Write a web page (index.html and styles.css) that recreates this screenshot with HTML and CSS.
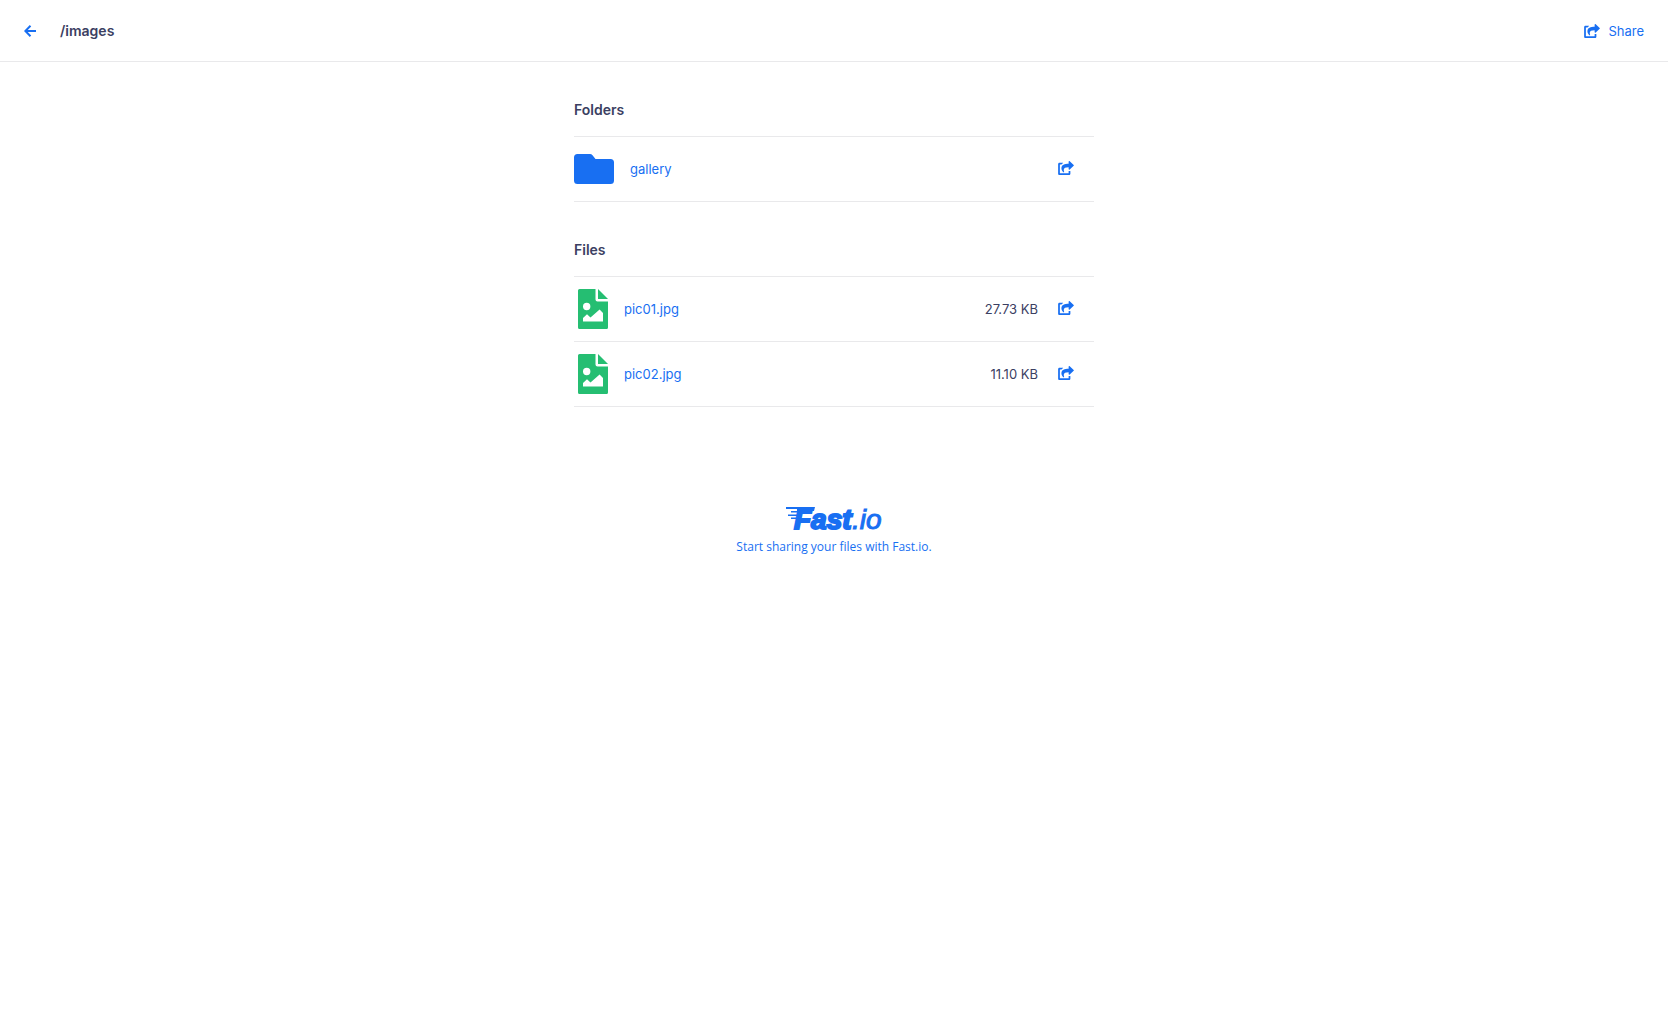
FILE: index.html
```html
<!DOCTYPE html>
<html lang="en">
<head>
    <meta charset="UTF-8">
    <meta name="viewport" content="width=device-width, initial-scale=1">
    <title>/images</title>
    <link rel="stylesheet" href="styles.css">
</head>
<body>
    <svg class="sprite" aria-hidden="true">
        <symbol id="icon-share" viewBox="0 0 576 512">
            <path d="M568.482 177.448L424.479 313.433C409.3 327.768 384 317.14 384 295.985v-71.963c-144.575.97-205.566 35.113-164.775 171.353 4.483 14.973-12.846 26.567-25.006 17.33C155.252 383.105 120 326.488 120 269.339c0-143.937 117.599-172.5 264-173.312V24.012c0-21.174 25.317-31.768 40.479-17.448l144.003 135.988c10.02 9.463 10.028 25.425 0 34.896zM384 379.128V448H64V128h50.916a11.99 11.99 0 0 0 8.648-3.693c14.953-15.568 32.237-27.89 51.014-37.676C185.708 80.83 181.584 64 169.033 64H48C21.49 64 0 85.49 0 112v352c0 26.51 21.49 48 48 48h352c26.51 0 48-21.49 48-48v-88.806c0-8.288-8.197-14.066-16.011-11.302a71.83 71.83 0 0 1-34.189 3.377c-7.27-1.046-13.8 4.514-13.8 11.859z"/>
        </symbol>
        <symbol id="icon-image" viewBox="0 0 30 40">
            <path fill-rule="evenodd" d="M1.5 0H17.500V10.500Q17.500 12.500 19.500 12.500H30V38.500Q30 40 28.500 40H1.500Q0 40 0 38.500V1.500Q0 0 1.500 0zM8.700 13.800a3.700 3.700 0 1 0 0 7.400a3.700 3.700 0 1 0 0-7.400zM5 32.500H25V24L21.600 20.400L12.500 28.500L9 25.200L5 29z"/>
            <path d="M20 0L30 10H20z"/>
        </symbol>
    </svg>

    <header class="topbar">
        <a class="back" href="#" aria-label="Back">
            <svg width="12" height="12" viewBox="0 0 12 12"><path d="M6.500 .8L1.300 6L6.500 11.200M1.500 6H12" fill="none" stroke="currentColor" stroke-width="2"/></svg>
        </a>
        <h1 class="path">/images</h1>
        <button class="share" type="button">
            <svg class="share-icon"><use href="#icon-share"/></svg>
            Share
        </button>
    </header>

    <main class="container">
        <section class="group">
            <h2 class="group-title">Folders</h2>
            <ul class="list">
                <li class="item">
                    <svg class="folder-icon" viewBox="0 0 40 30"><path d="M3.500 0H16Q17.500 0 18.500 1.200L21.500 5H36.500Q40 5 40 8.500V26.500Q40 30 36.500 30H3.500Q0 30 0 26.500V3.500Q0 0 3.500 0z"/></svg>
                    <a class="name" href="#">gallery</a>
                    <button class="item-share" type="button" aria-label="Share gallery"><svg class="share-icon"><use href="#icon-share"/></svg></button>
                </li>
            </ul>
        </section>

        <section class="group">
            <h2 class="group-title">Files</h2>
            <ul class="list">
                <li class="item">
                    <svg class="file-icon"><use href="#icon-image"/></svg>
                    <a class="name" href="#">pic01.jpg</a>
                    <span class="size">27.73 KB</span>
                    <button class="item-share" type="button" aria-label="Share pic01.jpg"><svg class="share-icon"><use href="#icon-share"/></svg></button>
                </li>
                <li class="item">
                    <svg class="file-icon"><use href="#icon-image"/></svg>
                    <a class="name" href="#">pic02.jpg</a>
                    <span class="size">11.10 KB</span>
                    <button class="item-share" type="button" aria-label="Share pic02.jpg"><svg class="share-icon"><use href="#icon-share"/></svg></button>
                </li>
            </ul>
        </section>
    </main>

    <footer class="footer">
        <a class="promo" href="#">
            <svg class="logo" width="96" height="34" viewBox="0 -4 96 34">
                <path d="M0 0H29L28 4H11V2H0zM5 4H14V5.500H5zM2 7.500H12V9H2zM5 10.500H12V12H5z"/>
                <text class="logo-fast" x="8" y="22">Fast</text>
                <text class="logo-io" x="66" y="22">.io</text>
            </svg>
            <span>Start sharing your files with Fast.io.</span>
        </a>
    </footer>
</body>
</html>
```
FILE: styles.css
```css
* {
    box-sizing: border-box;
}
body {
    margin: 0;
    font-family: Inter, 'Liberation Sans', sans-serif;
    font-size: 13px;
    line-height: 16px;
    color: #3b4062;
    background-color: #fff;
}
a {
    color: #186ff2;
    text-decoration: none;
}
button {
    padding: 0;
    border: none;
    background: none;
    font: inherit;
    color: #186ff2;
    cursor: pointer;
}
svg {
    display: block;
    fill: currentColor;
}
.sprite {
    display: none;
}
.topbar {
    display: flex;
    align-items: center;
    height: 62px;
    padding: 0 24px;
    border-bottom: 1px solid #e9e9eb;
}
.path {
    margin: 0 auto 0 24px;
    font-size: 14px;
    font-weight: 600;
}
.share {
    display: flex;
    align-items: center;
    gap: 8px;
}
.share-icon {
    width: 16px;
    height: 14px;
}
.container {
    max-width: 520px;
    margin: 0 auto;
}
.group {
    padding-top: 40px;
}
.group-title {
    margin: 0 0 18px;
    font-size: 14px;
    font-weight: 600;
}
.list {
    margin: 0;
    padding: 0;
    list-style: none;
    border-top: 1px solid #e9e9eb;
}
.item {
    display: flex;
    align-items: center;
    height: 65px;
    padding-right: 20px;
    border-bottom: 1px solid #e9e9eb;
}
.folder-icon {
    width: 40px;
    height: 30px;
    color: #186ff2;
}
.file-icon {
    width: 30px;
    height: 40px;
    margin-left: 4px;
    color: #25be72;
}
.name {
    margin: 0 auto 0 16px;
}
.item-share {
    margin-left: 20px;
    padding-bottom: 2px;
}
.footer {
    display: flex;
    justify-content: center;
    margin-top: 96px;
    font-family: 'Open Sans', sans-serif;
    font-size: 12px;
}
.promo {
    display: flex;
    flex-direction: column;
    align-items: center;
    gap: 2px;
}
.logo-fast,
.logo-io {
    font-family: 'Liberation Sans', sans-serif;
    font-size: 28px;
    font-style: italic;
    stroke: currentColor;
    stroke-width: 1;
}
.logo-fast {
    font-weight: bold;
    stroke-width: 2;
}
```
